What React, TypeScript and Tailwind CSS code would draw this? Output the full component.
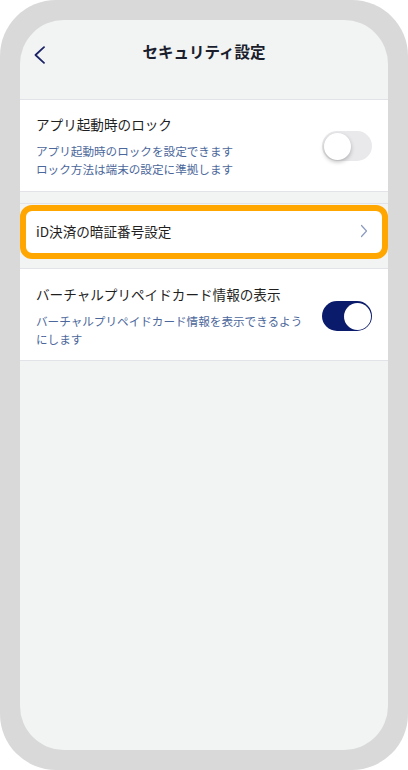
import React from 'react';

const font = { fontFamily: '"Noto Sans CJK JP", "Noto Sans", sans-serif' };

const Toggle = ({ on }: { on: boolean }) => (
  <div
    className={`relative h-[30px] w-[50px] shrink-0 rounded-full ${on ? 'bg-[#0b1b6b]' : 'bg-[#e9e9ec]'}`}
  >
    <div
      className={`absolute top-[1.5px] h-[27px] w-[27px] rounded-full bg-white ${
        on ? 'right-[1.5px]' : 'left-[1.5px] shadow-[0_2px_4px_rgba(0,0,0,0.25)]'
      }`}
    />
  </div>
);

const App = () => {
  return (
    <div className="h-[770px] w-[408px] bg-white" style={font}>
      <div className="h-full w-full rounded-[56px] bg-[#d9d9d9] p-[20px]">
        <div className="h-full w-full overflow-hidden rounded-[44px] bg-[#f2f3f3]">
          {/* Header */}
          <div className="relative flex h-[79px] items-start justify-center pt-[19px]">
            <svg
              className="absolute left-[13px] top-[26px]"
              width="13"
              height="18"
              viewBox="0 0 13 18"
              fill="none"
            >
              <path d="M11 1.2L2.5 9L11 16.8" stroke="#1b2366" strokeWidth="1.8" strokeLinecap="round" strokeLinejoin="round" />
            </svg>
            <h1 className="text-[15.5px] font-bold leading-[24px] text-[#1b1e2c]">セキュリティ設定</h1>
          </div>

          {/* App lock */}
          <div className="flex items-center border-y border-[#e1e3e8] bg-white pl-[16px] pr-[16px] pt-[14px] pb-[13px]">
            <div className="flex-1">
              <p className="text-[13.6px] leading-[20px] text-[#1f1f1f]">アプリ起動時のロック</p>
              <p className="mt-[9px] text-[11.6px] leading-[17.5px] text-[#4b679b]">
                アプリ起動時のロックを設定できます
                <br />
                ロック方法は端末の設定に準拠します
              </p>
            </div>
            <Toggle on={false} />
          </div>

          {/* iD PIN */}
          <div className="mt-[11px] border-t border-[#e1e3e8] pt-[1px]">
            <div className="flex h-[54px] items-center justify-between rounded-[12px] border-[6px] border-[#ffa600] bg-white pb-[2px] pl-[10px] pr-[14px]">
              <span className="text-[13.6px] leading-[20px] text-[#1f1f1f]">iD決済の暗証番号設定</span>
              <svg width="8" height="14" viewBox="0 0 8 14" fill="none">
                <path d="M1.5 1.5L6.5 7L1.5 12.5" stroke="#8a9bbf" strokeWidth="1.2" strokeLinecap="round" strokeLinejoin="round" />
              </svg>
            </div>
          </div>

          {/* Virtual prepaid card */}
          <div className="mt-[9px] flex items-center border-y border-[#e1e3e8] bg-white pl-[16px] pr-[16px] pt-[15px] pb-[12px]">
            <div className="flex-1">
              <p className="text-[13.6px] leading-[20px] text-[#1f1f1f]">バーチャルプリペイドカード情報の表示</p>
              <p className="mt-[9px] text-[11.6px] leading-[17.5px] text-[#4b679b]">
                バーチャルプリペイドカード情報を表示できるよう
                <br />
                にします
              </p>
            </div>
            <Toggle on={true} />
          </div>
        </div>
      </div>
    </div>
  );
};

export default App;
